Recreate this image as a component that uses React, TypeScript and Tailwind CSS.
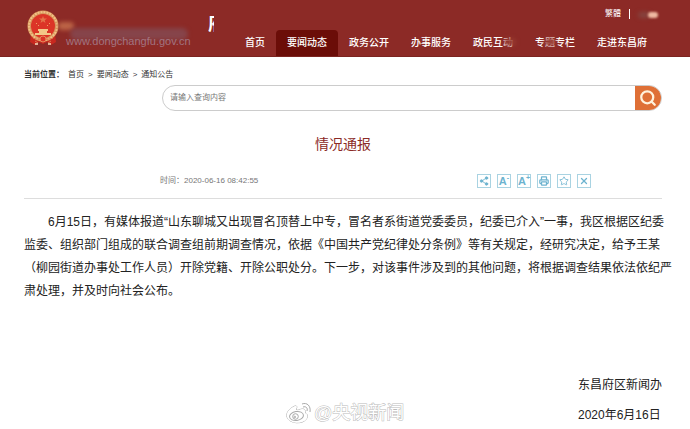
import React from "react";
import { Printer, Search, Share2, Star, X } from "lucide-react";

const smudge = "absolute rounded-full blur-[2px]";

const nav: { label: string; active?: boolean; cover?: string }[] = [
  { label: "首页" },
  { label: "要闻动态", active: true },
  { label: "政务公开" },
  { label: "办事服务" },
  { label: "政民互动", cover: "right-2 top-2 h-2 w-3" },
  { label: "专题专栏", cover: "left-5 top-2 h-2 w-3" },
  { label: "走进东昌府" },
];

const lines = [
  "监委、组织部门组成的联合调查组前期调查情况，依据《中国共产党纪律处分条例》等有关规定，经研究决定，给予王某",
  "（柳园街道办事处工作人员）开除党籍、开除公职处分。下一步，对该事件涉及到的其他问题，将根据调查结果依法依纪严",
  "肃处理，并及时向社会公布。",
];

function Emblem() {
  return (
    <svg viewBox="0 0 34 36" className="h-9 w-[34px] shrink-0" aria-label="国徽">
      <path d="M5 24 4 32l5 3 4-3 4 2 4-2 4 3 5-3-1-8Z" fill="#c8281f" />
      <circle cx="17" cy="16" r="15.500" fill="#d9955b" />
      <circle cx="17" cy="16" r="14" fill="none" stroke="#f0c287" strokeWidth="2" strokeDasharray="2 1" />
      <circle cx="17" cy="16" r="12" fill="#dc3527" />
      <path d="m17 6 1 2.500h3l-2.300 1.700.8 2.800-2.500-1.700-2.500 1.700.8-2.800L13 8.500h3Z" fill="#e3744a" />
      <path d="M10 13h1v1h-1ZM12 15h1v1h-1ZM21 15h1v1h-1ZM23 13h1v1h-1Z" fill="#eda05f" />
      <path d="M12 19h10v2H12ZM13 21h8v2H13ZM9 23h16v2H9Z" fill="#f3c887" />
      <path d="M7 28c4 2 16 2 20 0M9 31l3 2M25 31l-3 2" stroke="#e07a50" strokeWidth="1" fill="none" />
      <circle cx="17" cy="29" r="3" fill="#dc3527" stroke="#e58a5c" />
      <path d="M9 34h3M22 34h3" stroke="#f6dfbd" strokeWidth="1.500" />
    </svg>
  );
}

function WeiboMark() {
  return (
    <svg viewBox="0 0 26 22" className="h-[22px] w-[26px]" fill="none" stroke="#aaa" strokeWidth="1">
      <path d="M10 7c2-3 0-4-3-2-4 2-7 6-6 10 2 7 17 8 20 1 1-3 0-4-2-5 1-4-2-5-6-3-1 0-3 1-3-1Z" fill="#fff" />
      <ellipse cx="10.500" cy="14" rx="7" ry="4.500" transform="rotate(-8 10.500 14)" />
      <circle cx="9.500" cy="14.500" r="2.800" />
      <circle cx="8.800" cy="15" r=".8" />
      <path d="M16 2c5-2 9 2 8 8M17 5c3-1 5 1 4 4" />
    </svg>
  );
}

const tool = "flex size-3.5 items-center justify-center border border-[#a9d3e2] text-[#6db3cf]";

export default function App() {
  return (
    <div className="bg-white font-['Liberation_Sans','Noto_Sans_CJK_SC',sans-serif] text-[#333]">
      <header className="flex justify-between border-b border-[#7c2420] bg-[#8c2a26] pr-8 pl-[26px] text-white">
        <div className="flex pt-2.5 pb-[7px]">
          <Emblem />
          <div className="relative ml-1.5 w-[124px] pt-[23px]">
            <span className={`${smudge} -left-2 top-3 h-2 w-4 bg-[#bd6547]`} />
            <span className={`${smudge} left-1 top-[18px] h-3 w-[118px] bg-[#86444a]`} />
            <a href="#site" className="relative block text-[11px] leading-4 text-[#a27480]">www.dongchangfu.gov.cn</a>
          </div>
          <div className="ml-[18px] h-6 w-[6px] overflow-hidden whitespace-nowrap pt-1 text-lg leading-5 font-bold">府</div>
        </div>
        <div className="flex flex-col items-end justify-between">
          <div className="flex items-center gap-2 pt-2 text-[8px] leading-3">
            <a href="#traditional">繁體</a>
            <span className="h-2.5 w-px bg-white" />
            <span className="relative h-3 w-5">
              <span className={`${smudge} left-0 top-1 h-1.5 w-3 bg-[#85443f]`} />
              <span className="absolute right-0 top-1 h-1.5 w-2.5 rounded-full bg-[#eeb9a2] blur-[1px]" />
            </span>
          </div>
          <nav className="flex text-[10px] leading-[26px] font-medium">
            {nav.map((n) => (
              <a key={n.label} href="#nav" className={`relative px-[11px] whitespace-nowrap ${n.active ? "rounded-t-sm bg-[#6b0d08]" : ""}`}>
                {n.label}
                {n.cover && <span className={`${smudge} ${n.cover} bg-[#95382f]`} />}
              </a>
            ))}
          </nav>
        </div>
      </header>

      <main className="pr-7 pl-6">
        <nav className="flex gap-1 pt-3 text-[8px] leading-3">
          <span className="font-bold">当前位置：</span>
          <a href="#home">首页</a>
          <span>&gt;</span>
          <a href="#news">要闻动态</a>
          <span>&gt;</span>
          <a href="#notice">通知公告</a>
        </nav>

        <form className="mt-1 ml-[138px] flex h-[26px] overflow-hidden rounded-full border border-[#ccc]" onSubmit={(e) => e.preventDefault()}>
          <input aria-label="请输入查询内容" placeholder="请输入查询内容" className="min-w-0 flex-1 px-[7px] text-[8px] outline-none placeholder:text-[#777]" />
          <button aria-label="搜索" className="flex w-[26px] items-center justify-center bg-[#df7036] text-[#fff2dc]">
            <Search className="size-[18px]" strokeWidth={3} />
          </button>
        </form>

        <h1 className="mt-[23px] text-center text-sm leading-5 text-[#8c2a26]">情况通报</h1>

        <div className="mt-[18px] flex items-center justify-between border-b border-[#ddd] pr-[71px] pb-2 pl-[136px]">
          <p className="flex text-[8px] leading-[18px] text-[#777]">
            <span>时间：</span>
            <time>2020-06-16 08:42:55</time>
          </p>
          <div className="flex gap-1.5">
            <button aria-label="分享" className={tool}><Share2 className="size-2.5" fill="currentColor" /></button>
            <button aria-label="缩小字号" className={`${tool} text-[11px] leading-3 font-bold`}>A<sup className="text-[7px]">-</sup></button>
            <button aria-label="放大字号" className={`${tool} text-[11px] leading-3 font-bold`}>A<sup className="text-[7px]">+</sup></button>
            <button aria-label="打印" className={tool}><Printer className="size-2.5" strokeWidth={3} /></button>
            <button aria-label="收藏" className={tool}><Star className="size-2.5" /></button>
            <button aria-label="关闭" className={tool}><X className="size-2.5" strokeWidth={3} /></button>
          </div>
        </div>

        <article className="pt-3 text-xs leading-[23px] whitespace-nowrap text-[#222]">
          <p>
            <span className="block pl-6">6月15日，有媒体报道“山东聊城又出现冒名顶替上中专，冒名者系街道党委委员，纪委已介入”一事，我区根据区纪委</span>
            {lines.map((l) => (
              <span key={l} className="block">{l}</span>
            ))}
          </p>
        </article>

        <footer className="relative mt-[67px] flex flex-col items-end text-xs leading-[30px] text-[#222]">
          <div className="text-left">
            <p>东昌府区新闻办</p>
            <p>2020年6月16日</p>
          </div>
          <div className="absolute bottom-0.5 left-[262px] flex items-center gap-0.5 text-lg leading-[30px] text-white [-webkit-text-stroke:1px_#bbb] [paint-order:stroke]">
            <WeiboMark />
            <span>@央视新闻</span>
          </div>
        </footer>
      </main>
    </div>
  );
}
